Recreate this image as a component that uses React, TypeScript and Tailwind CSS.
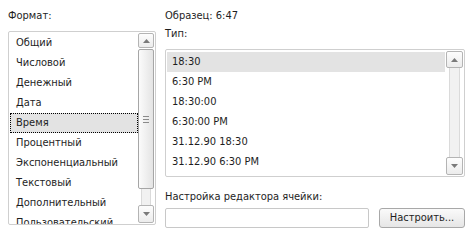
import React from 'react'

const formats = [
  'Общий',
  'Числовой',
  'Денежный',
  'Дата',
  'Время',
  'Процентный',
  'Экспоненциальный',
  'Текстовый',
  'Дополнительный',
  'Пользовательский'
]

const types = [
  '18:30',
  '6:30 PM',
  '18:30:00',
  '6:30:00 PM',
  '31.12.90 18:30',
  '31.12.90 6:30 PM'
]

const Arrow = ({ down }: { down?: boolean }) => (
  <svg width="7" height="4" viewBox="0 0 7 4" className="block">
    <path d={down ? 'M0 0h7L3.5 4z' : 'M3.5 0L7 4H0z'} fill="#7a7a7a" />
  </svg>
)

const ScrollButton = ({ down, h }: { down?: boolean; h: string }) => (
  <div
    className={`${h} w-full flex items-center justify-center rounded-[2px] border border-[#b4b4b4] bg-gradient-to-b from-[#fdfdfd] to-[#ececec]`}
  >
    <Arrow down={down} />
  </div>
)

const App: React.FC = () => {
  const selectedFormat = 'Время'
  const selectedType = '18:30'

  return (
    <div
      className="w-[473px] h-[241px] bg-white text-[#1e1e1e] text-[11px] flex pl-[8px] overflow-hidden"
      style={{ fontFamily: '"DejaVu Sans Condensed", "DejaVu Sans", sans-serif' }}
    >
      {/* Format list */}
      <div className="w-[148px] flex flex-col">
        <div className="h-[31px] pt-[9px] leading-[14px]">Формат:</div>
        <div className="h-[194px] flex border border-[#cfcfcf] rounded-[2px] overflow-hidden">
          <div className="flex-1 pt-[1px] pl-[1px] overflow-hidden">
            {formats.map((f) => (
              <div
                key={f}
                className={`h-[20px] leading-[18px] pl-[5px] whitespace-nowrap ${
                  f === selectedFormat
                    ? 'bg-[#e3e3e3] border border-dotted border-black pl-[4px]'
                    : 'border border-transparent'
                }`}
              >
                {f}
              </div>
            ))}
          </div>
          {/* scrollbar */}
          <div className="w-[16px] mr-[1px] py-[1px] flex flex-col">
            <ScrollButton h="h-[15px]" />
            <div className="h-[140px] mt-[1px] rounded-[2px] border border-[#a6a6a6] bg-gradient-to-r from-[#fbfbfb] to-[#e4e4e4] flex items-center justify-center">
              <div className="flex flex-col gap-[2px]">
                <div className="w-[6px] h-[1px] bg-[#8a8a8a]" />
                <div className="w-[6px] h-[1px] bg-[#8a8a8a]" />
                <div className="w-[6px] h-[1px] bg-[#8a8a8a]" />
              </div>
            </div>
            <div className="flex-1 mx-[3px] border-x border-[#dadada] bg-[#f1f1f1]" />
            <ScrollButton down h="h-[18px]" />
          </div>
        </div>
      </div>

      {/* Right side */}
      <div className="ml-[9px] w-[300px] flex flex-col">
        <div className="h-[27px] pt-[9px] leading-[14px]">Образец: 6:47</div>
        <div className="h-[22px] leading-[14px]">Тип:</div>
        <div className="h-[128px] flex border border-[#cfcfcf] rounded-[2px] overflow-hidden">
          <div className="flex-1 pt-[2px] pl-[1px]">
            {types.map((t) => (
              <div
                key={t}
                className={`h-[20px] leading-[20px] pl-[5px] ${
                  t === selectedType ? 'bg-[#e3e3e3]' : ''
                }`}
              >
                {t}
              </div>
            ))}
          </div>
          <div className="w-[17px] mr-[1px] ml-[1px] py-[1px] flex flex-col">
            <ScrollButton h="h-[17px]" />
            <div className="flex-1 mx-[3px] border-x border-[#dadada] bg-[#f1f1f1]" />
            <ScrollButton down h="h-[18px]" />
          </div>
        </div>
        <div className="mt-[13px] leading-[14px]">Настройка редактора ячейки:</div>
        <div className="mt-[4px] flex">
          <div className="w-[204px] h-[20px] border border-[#c8c8c8] rounded-[2px] bg-white" />
          <button className="ml-[10px] w-[86px] h-[20px] rounded-[3px] border border-[#a8a8a8] bg-gradient-to-b from-[#fafafa] to-[#e6e6e6] text-[11px] leading-[18px] text-[#1e1e1e]">
            Настроить...
          </button>
        </div>
      </div>
    </div>
  )
}

export default App
